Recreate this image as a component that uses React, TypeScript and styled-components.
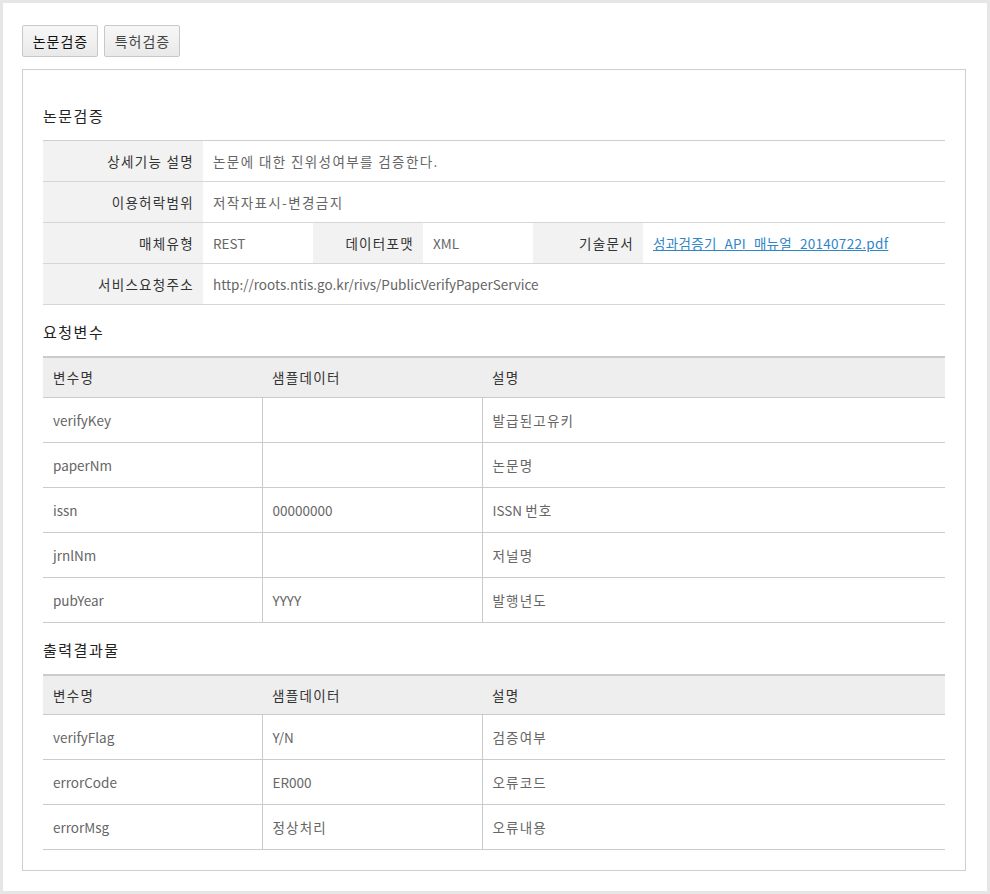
import React from "react";
import styled, { createGlobalStyle } from "styled-components";

const Global = createGlobalStyle`
  html, body { margin: 0; padding: 0; background: #fff; }
  body { font-family: "Noto Sans CJK KR", "Noto Sans", sans-serif; color: #333; }
  * { box-sizing: border-box; }
`;

const Frame = styled.div`
  width: 990px;
  height: 894px;
  border: 3px solid #e6e6e6;
  padding: 22px 21px 0 19px;
  background: #fff;
`;

const TabBar = styled.div`
  display: flex;
  gap: 6px;
  margin-bottom: 12px;
`;

const TabButton = styled.button<{ $active?: boolean }>`
  width: 76px;
  height: 32px;
  border: 1px solid #c8c8c8;
  border-radius: 2px;
  background: linear-gradient(#f7f7f7, #e9e9e9);
  font-family: "Noto Sans CJK KR", sans-serif;
  font-size: 14px;
  letter-spacing: 1px;
  color: ${(p) => (p.$active ? "#111" : "#444")};
  padding: 0 0 0 1px;
  line-height: 30px;
  cursor: pointer;
`;

const Box = styled.div`
  border: 1px solid #cfcfcf;
  padding: 35px 20px 20px 20px;
`;

const Title = styled.h3<{ $first?: boolean }>`
  margin: ${(p) => (p.$first ? "0" : "16px")} 0 13px 0;
  font-size: 15px;
  letter-spacing: 1.5px;
  font-weight: normal;
  line-height: 22px;
  color: #222;
`;

const InfoTable = styled.table`
  width: 100%;
  border-collapse: collapse;
  table-layout: fixed;
  border-top: 1px solid #cfcfcf;
  font-size: 13.5px;
`;

const InfoTh = styled.th`
  background: #f2f2f2;
  text-align: right;
  font-weight: normal;
  color: #333;
  letter-spacing: 1.3px;
  padding: 0 9px 0 10px;
  height: 41px;
  border-bottom: 1px solid #d6d6d6;
`;

const InfoTd = styled.td<{ $kr?: boolean }>`
  text-align: left;
  color: #666;
  padding: 0 10px;
  height: 41px;
  letter-spacing: ${(p) => (p.$kr ? "1.4px" : "0")};
  border-bottom: 1px solid #d6d6d6;
  white-space: nowrap;
`;

const DocLink = styled.a`
  color: #2f86c8;
  text-decoration: underline;
  letter-spacing: 0.3px;
`;

const DataTable = styled.table`
  width: 100%;
  border-collapse: collapse;
  table-layout: fixed;
  border-top: 2px solid #cbcbcb;
  font-size: 13.5px;
`;

const HeadCell = styled.th`
  background: #eeeeee;
  text-align: left;
  font-weight: normal;
  color: #333;
  letter-spacing: 1.3px;
  padding: 0 10px;
  height: 40px;
  border-bottom: 1px solid #cbcbcb;
`;

const BodyCell = styled.td`
  color: #666;
  padding: 0 10px;
  height: 45px;
  border-bottom: 1px solid #cbcbcb;
  & + & { border-left: 1px solid #cbcbcb; }
`;

const Hangul = styled.span`
  letter-spacing: 1.2px;
`;

type Row = [string, string, string];

const requestRows: Row[] = [
  ["verifyKey", "", "발급된고유키"],
  ["paperNm", "", "논문명"],
  ["issn", "00000000", "ISSN 번호"],
  ["jrnlNm", "", "저널명"],
  ["pubYear", "YYYY", "발행년도"],
];

const outputRows: Row[] = [
  ["verifyFlag", "Y/N", "검증여부"],
  ["errorCode", "ER000", "오류코드"],
  ["errorMsg", "정상처리", "오류내용"],
];

// Wrap runs of Hangul in a span so only they get the wider tracking.
const Text: React.FC<{ value: string }> = ({ value }) => {
  const parts = value.split(/([\uAC00-\uD7A3]+)/).filter(Boolean);
  return (
    <>
      {parts.map((p, i) =>
        /[\uAC00-\uD7A3]/.test(p) ? <Hangul key={i}>{p}</Hangul> : <React.Fragment key={i}>{p}</React.Fragment>
      )}
    </>
  );
};

const VarTable: React.FC<{ rows: Row[] }> = ({ rows }) => (
  <DataTable>
    <colgroup>
      <col style={{ width: 219 }} />
      <col style={{ width: 220 }} />
      <col />
    </colgroup>
    <thead>
      <tr>
        <HeadCell>변수명</HeadCell>
        <HeadCell>샘플데이터</HeadCell>
        <HeadCell>설명</HeadCell>
      </tr>
    </thead>
    <tbody>
      {rows.map((r) => (
        <tr key={r[0]}>
          <BodyCell><Text value={r[0]} /></BodyCell>
          <BodyCell><Text value={r[1]} /></BodyCell>
          <BodyCell><Text value={r[2]} /></BodyCell>
        </tr>
      ))}
    </tbody>
  </DataTable>
);

export default function App() {
  return (
    <>
      <Global />
      <Frame>
        <TabBar>
          <TabButton $active>논문검증</TabButton>
          <TabButton>특허검증</TabButton>
        </TabBar>
        <Box>
          <Title $first>논문검증</Title>
          <InfoTable>
            <colgroup>
              <col style={{ width: 160 }} />
              <col style={{ width: 110 }} />
              <col style={{ width: 110 }} />
              <col style={{ width: 110 }} />
              <col style={{ width: 110 }} />
              <col />
            </colgroup>
            <tbody>
              <tr>
                <InfoTh>상세기능 설명</InfoTh>
                <InfoTd $kr colSpan={5}>논문에 대한 진위성여부를 검증한다.</InfoTd>
              </tr>
              <tr>
                <InfoTh>이용허락범위</InfoTh>
                <InfoTd $kr colSpan={5}>저작자표시-변경금지</InfoTd>
              </tr>
              <tr>
                <InfoTh>매체유형</InfoTh>
                <InfoTd>REST</InfoTd>
                <InfoTh>데이터포맷</InfoTh>
                <InfoTd>XML</InfoTd>
                <InfoTh>기술문서</InfoTh>
                <InfoTd>
                  <DocLink href="#">성과검증기_API_매뉴얼_20140722.pdf</DocLink>
                </InfoTd>
              </tr>
              <tr>
                <InfoTh>서비스요청주소</InfoTh>
                <InfoTd colSpan={5}>http://roots.ntis.go.kr/rivs/PublicVerifyPaperService</InfoTd>
              </tr>
            </tbody>
          </InfoTable>
          <Title>요청변수</Title>
          <VarTable rows={requestRows} />
          <Title>출력결과물</Title>
          <VarTable rows={outputRows} />
        </Box>
      </Frame>
    </>
  );
}
